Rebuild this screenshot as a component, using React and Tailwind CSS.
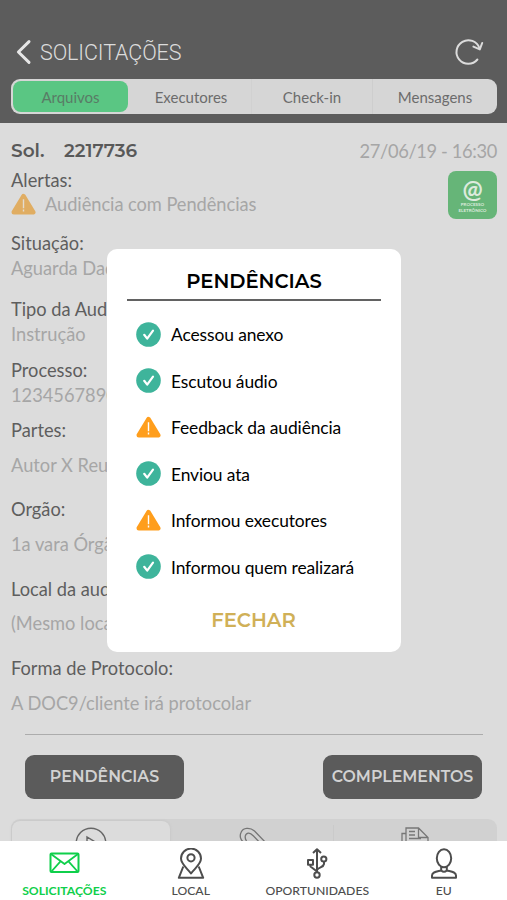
const LATO = "font-['Lato','Liberation_Sans',sans-serif]";
const HEAVY = "font-['Montserrat','Inter',sans-serif]";

function CheckBadge() {
  return (
    <svg width="25" height="25" viewBox="0 0 25 25" className="shrink-0">
      <circle cx="12.5" cy="12.5" r="12.3" fill="#3eb49b" />
      <path d="M8.2 12.8 11.2 16.6 17 8.6" fill="none" stroke="#fff" strokeWidth="2.2" strokeLinecap="round" strokeLinejoin="round" />
    </svg>
  );
}

function WarningBadge({ color, mark }) {
  return (
    <svg width="25" height="25" viewBox="0 0 25 25" className="shrink-0">
      <path d="M12.5 4.2 22.2 20.3H2.8Z" fill={color} stroke={color} strokeWidth="4.6" strokeLinejoin="round" />
      <path d="M12.5 7.3V16.2M12.5 17.6V19.6" fill="none" stroke={mark} strokeWidth="1.4" />
    </svg>
  );
}

const fields = [
  { label: "Situação:", value: "Aguarda Dados", top: "mt-[16px]", gap: "mt-[1px]" },
  { label: "Tipo da Audiência:", value: "Instrução", top: "mt-[17px]", gap: "mt-[1px]" },
  { label: "Processo:", value: "1234567890", top: "mt-[12px]", gap: "mt-[1px]" },
  { label: "Partes:", value: "Autor X Reu", top: "mt-[11px]", gap: "mt-[11px]" },
  { label: "Orgão:", value: "1a vara Órgão", top: "mt-[20px]", gap: "mt-[11px]" },
  { label: "Local da audiência:", value: "(Mesmo local)", top: "mt-[21px]", gap: "mt-[10px]" },
  { label: "Forma de Protocolo:", value: "A DOC9/cliente irá protocolar", top: "mt-[21px]", gap: "mt-[11px]" },
];

const pending = [
  { text: "Acessou anexo", done: true },
  { text: "Escutou áudio", done: true },
  { text: "Feedback da audiência", done: false },
  { text: "Enviou ata", done: true },
  { text: "Informou executores", done: false },
  { text: "Informou quem realizará", done: true },
];

function Header() {
  return (
    <header className="h-[123px] shrink-0 bg-[#5c5c5c] pl-[11px] pr-[10px] pt-[36px]">
      <div className="flex h-8 items-center">
        <svg width="18" height="26" viewBox="0 0 18 26" className="ml-[4px]">
          <path d="M14 2.6 3.4 13 14 23.4" fill="none" stroke="#e6e6e6" strokeWidth="3" strokeLinecap="round" strokeLinejoin="round" />
        </svg>
        <h1 className="ml-[7px] pt-px font-['Roboto',sans-serif] text-[21.5px] font-[350] leading-8 tracking-[-0.1px] text-[#dcdcdc]">SOLICITAÇÕES</h1>
        <svg width="30" height="30" viewBox="0 0 30 30" className="ml-auto mr-[13px]" fill="none" stroke="#dcdcdc" strokeWidth="2" strokeLinecap="round" strokeLinejoin="round">
          <path d="M23.4 22.5A11.8 11.8 0 1 1 25.4 11" />
          <path d="M19.4 9.6 25.8 12.4 28.2 6" />
        </svg>
      </div>
      <div className={`mt-[11px] flex h-[35px] rounded-[9px] bg-[#d6d6d6] p-[2px] text-[15px] leading-[33px] text-[#6c6c6c] ${LATO}`}>
        <div className="mr-[3px] h-[31px] w-[115px] rounded-[8px] bg-[#5ac683] text-center text-[#597b66]">Arquivos</div>
        <div className="flex-1 text-center">Executores</div>
        <div className="my-[-2px] w-px bg-[#d1d1d1]" />
        <div className="flex-1 text-center">Check-in</div>
        <div className="my-[-2px] w-px bg-[#cecece]" />
        <div className="flex-1 pl-[2px] text-center">Mensagens</div>
      </div>
    </header>
  );
}

function Details() {
  return (
    <main className={`flex-1 overflow-hidden bg-[#dcdcdc] pl-[11px] pr-[10px] pt-[15px] text-[18.25px] leading-6 text-[#a6a6a6] ${LATO}`}>
      <div className="flex h-6 pt-px">
        <div className={`flex text-[18.5px] font-semibold text-[#595959] ${HEAVY}`}>
          <span className="w-[53px]">Sol.</span>
          <span className="tracking-[-0.05px]">2217736</span>
        </div>
        <span className="ml-auto text-[18.25px] tracking-[-0.35px]">27/06/19 - 16:30</span>
      </div>
      <div className="flex h-[53px] pt-[6px]">
        <div>
          <div className="text-[#5e5e5e]">Alertas:</div>
          <div className="flex items-center gap-[9px]">
            <WarningBadge color="#e0ad62" mark="#e3dccf" />
            <span className="-mt-px tracking-[-0.05px]">Audiência com Pendências</span>
          </div>
        </div>
        <div className="ml-auto mt-[3px] flex h-[48px] w-[49px] flex-col items-center rounded-[8px] bg-[#66b578] text-[#dcebdd]">
          <span className="mt-[4px] h-[27px] text-[24px] font-bold leading-[27px]">@</span>
          <span className="text-[4.5px] font-bold leading-[6px]">PROCESSO</span>
          <span className="text-[4.5px] font-bold leading-[6px]">ELETRÔNICO</span>
        </div>
      </div>
      {fields.map((f) => (
        <div key={f.label} className={f.top}>
          <div className="text-[#5e5e5e]">{f.label}</div>
          <div className={f.gap}>{f.value}</div>
        </div>
      ))}
      <div className="ml-[14px] mr-[14px] mt-[19px] h-px bg-[#acacac]" />
      <div className={`ml-[14px] mr-[15px] mt-[20px] flex justify-between text-[15.8px] font-semibold text-[#d2d2d2] ${HEAVY}`}>
        <button className="h-[44px] w-[159px] rounded-[9px] bg-[#5b5b5b]">PENDÊNCIAS</button>
        <button className="h-[44px] w-[159px] rounded-[9px] bg-[#5b5b5b]">COMPLEMENTOS</button>
      </div>
      <div className="mt-[20px] flex h-[40px] rounded-[9px] bg-[#d1d1d1] pl-px text-[#6c6c6c]">
        <div className="mt-[2px] flex w-[158px] justify-center rounded-t-[8px] bg-[#dcdcdc] shadow-[0_0_3px_#c2c2c2]">
          <svg width="32" height="32" viewBox="0 0 32 32" className="mt-[6px]" fill="none" stroke="#666" strokeWidth="1.4">
            <circle cx="16" cy="16" r="14.8" />
            <path d="M12 22V10L22 16Z" />
          </svg>
        </div>
        <div className="flex flex-1 justify-center">
          <svg width="34" height="34" viewBox="0 0 34 34" className="ml-[3px] mt-[8px]" fill="none" stroke="#757575" strokeWidth="1.3">
            <path d="M8.5 15.500C4 13.500 3.600 8.500 5 5.500 7 .5 14 .2 18.500 4L32 18M10.500 14C8.200 10.500 9 6.500 12.500 6.200 14.500 6 16 7.500 17.500 9L28 20" />
          </svg>
        </div>
        <div className="my-[6px] w-px bg-[#cacaca]" />
        <div className="flex flex-1 justify-center">
          <svg width="30" height="32" viewBox="0 0 30 32" className="mr-[2px] mt-[8px]" fill="none" stroke="#777" strokeWidth="1.3">
            <path d="M6 26V1h12.500l9.500 9.500v17M18.500 1v9.500h9.500M6 6.500H2V30h20M9 4.500h6M9 8h6M9 11.500h12" />
          </svg>
        </div>
      </div>
    </main>
  );
}

function BottomNav() {
  const icon = { fill: "none", stroke: "currentColor", strokeWidth: 2, strokeLinejoin: "round" };
  return (
    <nav className={`flex h-[59px] shrink-0 bg-white text-[12.2px] font-medium leading-4 text-[#4d4d4d] ${LATO}`}>
      <div className="flex flex-1 flex-col items-center pl-px pt-[7px] font-bold text-[#0fcf4b]">
        <svg width="32" height="32" viewBox="0 0 32 32" {...icon}>
          <rect x="2.500" y="5.500" width="28" height="18.500" rx="1" />
          <path d="M3 6 16.500 16 30 6M3 24 12.700 13.200M30 24 20.300 13.200" strokeWidth="1.800" />
        </svg>
        <span className="mt-[3px]">SOLICITAÇÕES</span>
      </div>
      <div className="flex flex-1 flex-col items-center pt-[7px]">
        <svg width="32" height="32" viewBox="0 0 32 32" {...icon}>
          <path d="M16 25.500C13 21 6 16.500 6 10.600a10 10 0 0 1 20 0C26 16.500 19 21 16 25.500Z" />
          <circle cx="16" cy="9.800" r="3.600" />
          <path d="M8.300 18.500 3.800 29.800H28.200L23.700 18.500" />
        </svg>
        <span className="mt-[3px]">LOCAL</span>
      </div>
      <div className="flex flex-1 flex-col items-center pt-[7px]">
        <svg width="32" height="32" viewBox="0 0 32 32" {...icon}>
          <path d="M16 24V2M12 5 16 1.200 20 5" />
          <circle cx="16" cy="27" r="2.700" />
          <rect x="7" y="12" width="5" height="4.800" />
          <circle cx="22.800" cy="11" r="2.600" />
          <path d="M9.500 17V18.500L16 23.500M23 14V16C22.500 19.500 18 19 16 22" />
        </svg>
        <span className="mt-[3px]">OPORTUNIDADES</span>
      </div>
      <div className="flex flex-1 flex-col items-center pt-[7px]">
        <svg width="32" height="32" viewBox="0 0 32 32" {...icon}>
          <ellipse cx="16" cy="10.300" rx="7.200" ry="9" />
          <path d="M13.200 18.800V22.500C9 23.500 4 23.500 4 27.500V29.800H28V27.500C28 23.500 23 23.500 18.800 22.500V18.800M13.200 22.500Q16 25 18.800 22.500" />
        </svg>
        <span className="mt-[3px]">EU</span>
      </div>
    </nav>
  );
}

function PendingDialog() {
  return (
    <div role="dialog" className={`absolute left-[107px] top-[249px] flex h-[403px] w-[294px] flex-col rounded-[10px] bg-white px-5 text-black ${LATO}`}>
      <h2 className={`mt-[19px] text-center text-[19.6px] font-semibold leading-[26px] ${HEAVY}`}>PENDÊNCIAS</h2>
      <div className="mt-[5px] h-[2px] bg-[#626262]" />
      <ul className="mt-[10px] pl-[9px]">
        {pending.map((p) => (
          <li key={p.text} className="flex h-[46.5px] items-center gap-[10px] text-[17.4px] leading-6 tracking-[-0.1px]">
            {p.done ? <CheckBadge /> : <WarningBadge color="#ff9e1c" mark="#fff" />}
            <span className="whitespace-nowrap pt-[2px]">{p.text}</span>
          </li>
        ))}
      </ul>
      <button className={`mt-[17px] pr-px text-center text-[19.6px] font-semibold leading-[26px] text-[#d0b057] ${HEAVY}`}>FECHAR</button>
    </div>
  );
}

export default function App() {
  return (
    <div className="relative flex h-[900px] w-[507px] flex-col overflow-hidden">
      <Header />
      <Details />
      <BottomNav />
      <PendingDialog />
    </div>
  );
}
